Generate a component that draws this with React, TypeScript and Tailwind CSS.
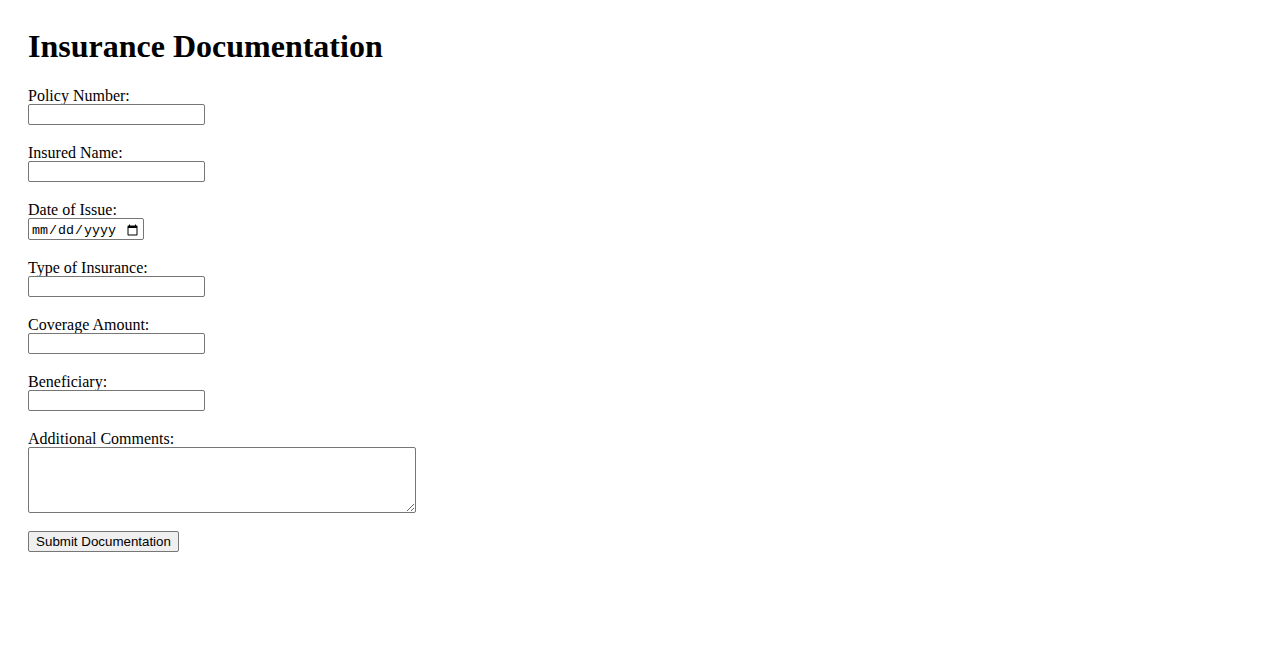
const FIELDS = [
  { label: "Policy Number:", type: "text" },
  { label: "Insured Name:", type: "text" },
  { label: "Date of Issue:", type: "date" },
  { label: "Type of Insurance:", type: "text" },
  { label: "Coverage Amount:", type: "text" },
  { label: "Beneficiary:", type: "text" },
];

export default function App() {
  return (
    <div className="min-h-screen bg-white text-black px-[28px] pt-[28px] font-['Liberation_Serif',serif]">
      <h1 className="text-[32px] leading-[37px] font-bold mb-[21px]">Insurance Documentation</h1>
      <form className="flex flex-col gap-[18px] items-start" onSubmit={(e) => e.preventDefault()}>
        {FIELDS.map((f) => (
          <div key={f.label} className="flex flex-col items-start">
            <label className="text-[16px] leading-[20px] h-[18px]">{f.label}</label>
            {f.type === "date" ? (
              <input
                type="date"
                className="w-[116px] h-[22px] border border-[#767676] rounded-[2px] bg-white px-[2px] pt-[3px] pb-0 text-[13.33px] leading-[16px] font-['Liberation_Mono',monospace]"
              />
            ) : (
              <input
                type="text"
                className="w-[177px] h-[21px] border border-[#767676] rounded-[2px] bg-white px-[2px] text-[13.33px] font-['Liberation_Sans',sans-serif]"
              />
            )}
          </div>
        ))}
        <div className="flex flex-col items-start">
          <label className="text-[16px] leading-[20px] h-[18px]">Additional Comments:</label>
          <textarea className="w-[388px] h-[66px] border border-[#767676] rounded-[2px] bg-white p-[2px] text-[13.33px] font-['Liberation_Mono',monospace]" />
        </div>
        <button
          type="submit"
          className="w-[151px] h-[21px] border border-[#767676] rounded-[2px] bg-[#efefef] px-[6px] text-[13.33px] leading-[15px] text-black font-['Liberation_Sans',sans-serif]"
        >
          Submit Documentation
        </button>
      </form>
    </div>
  );
}
